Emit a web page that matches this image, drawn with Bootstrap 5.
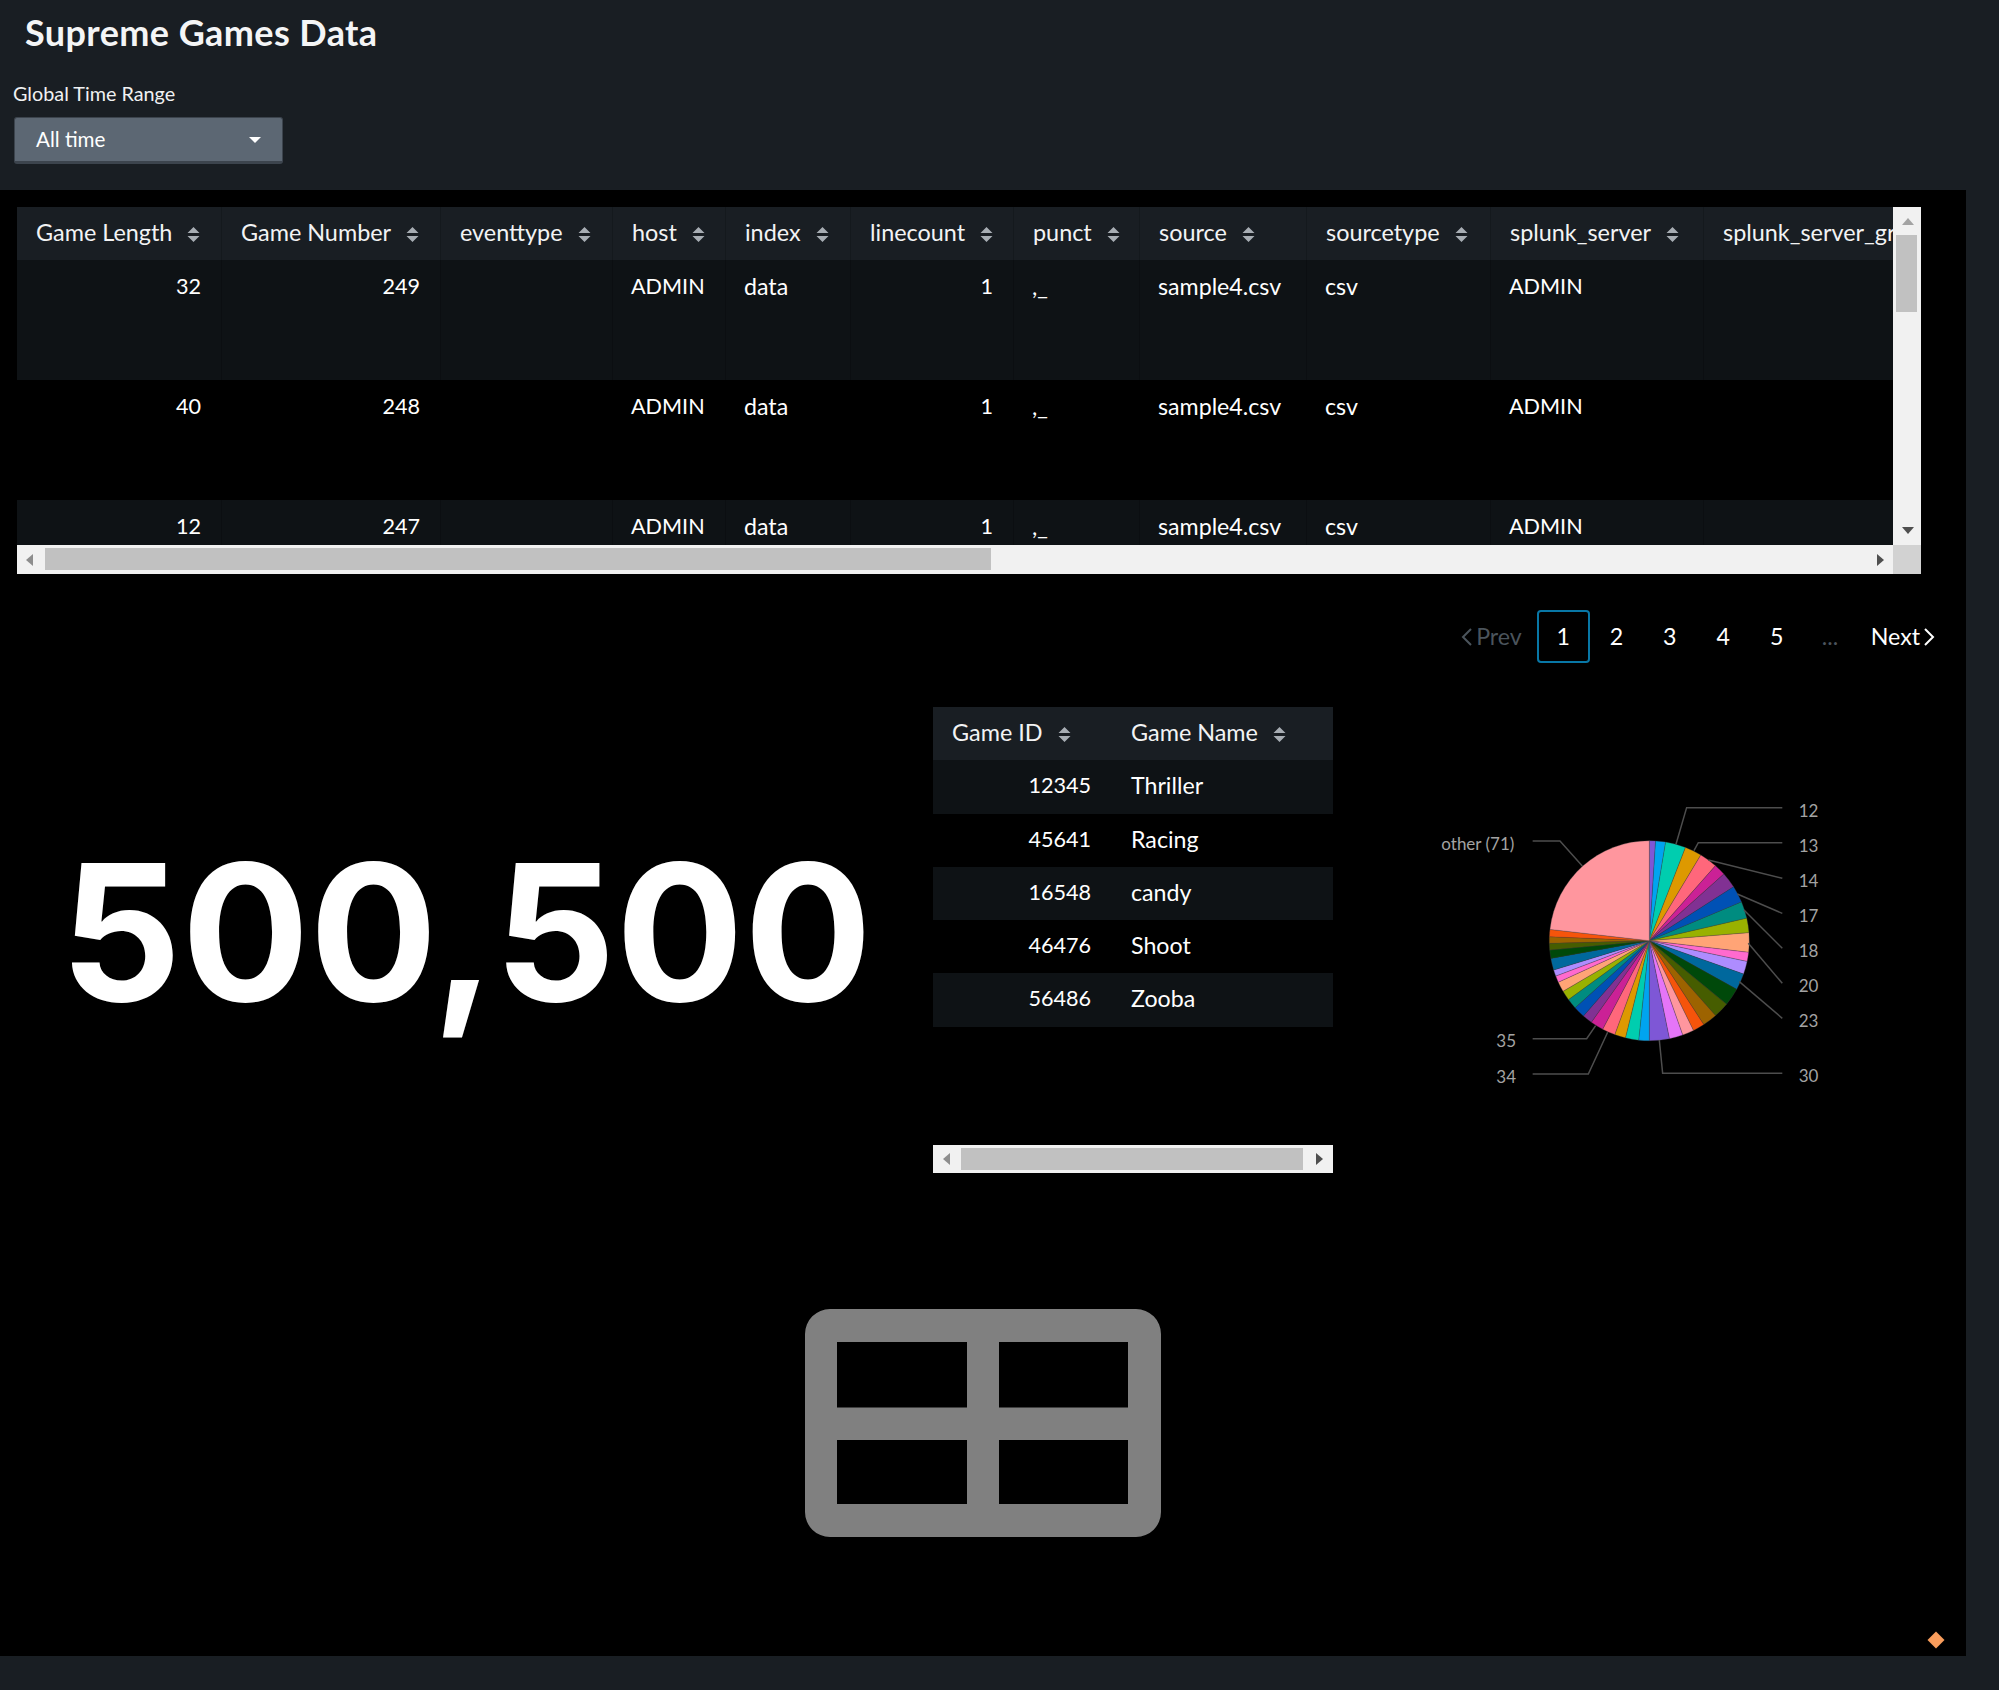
<!DOCTYPE html>
<html lang="en">
<head>
  <meta charset="UTF-8">
  <title>Supreme Games Data</title>
  <link href="https://cdn.jsdelivr.net/npm/bootstrap@5.3.0/dist/css/bootstrap.min.css" rel="stylesheet">
  <style>
    html, body { height: 100%; }
    body {
      background: #191e23;
      color: #fff;
      font-family: "Lato", "Liberation Sans", sans-serif;
      font-size: 23.2px;
      overflow: hidden;
    }
    .page-wrap { width: 1999px; height: 1690px; position: relative; }
    .dash-head { height: 190px; padding: 11px 13px 0 12px; }
    .dash-title { font-size: 36px; letter-spacing: .4px; font-weight: 700; line-height: 42px; margin: 0 0 0 13px; color: #f4f5f6; }
    .time-label { font-size: 19.8px; line-height: 24px; margin-top: 28px; margin-bottom: 12px; margin-left: 1px; color: #f0f1f2; }
    .time-btn {
      width: 269px; height: 47px; margin-left: 2px; padding: 0 21px;
      background: #5c6773; border: 1px solid #3c444d; border-bottom-width: 3px;
      color: #fff; font-size: 20.6px; border-radius: 3px;
    }
    .time-btn:hover, .time-btn:focus { background: #5c6773; color: #fff; border-color: #3c444d; }
    .time-btn::after { border-top: 6.500px solid #fff; border-right: 6.500px solid transparent; border-left: 6.500px solid transparent; margin-right: 0; }
    .dash-main { width: 1966px; height: 1466px; background: #000; padding: 17px 0 0 17px; }

    .scroll-box { position: relative; background: #f1f1f1; }
    .box-wide { width: 1904px; height: 367px; }
    .view-wide { width: 1876px; height: 338px; overflow: hidden; background: #000; }
    .data-tbl { table-layout: fixed; margin: 0; color: #fff; --bs-table-bg: transparent; --bs-table-color: #fff; border-collapse: separate; border-spacing: 0; }
    .data-tbl th, .data-tbl td { border: 0; border-left: 1px solid transparent; padding: 13px 20px 0 18px; line-height: 27px; font-weight: 400; white-space: nowrap; overflow: hidden; color: #fff; background: transparent; box-shadow: none; vertical-align: top; }
    .data-tbl th:first-child, .data-tbl td:first-child { border-left: 0; }
    .data-tbl th { background: #191e23; border-left-color: #14191d; height: 53px; padding: 12px 0 0 19px; font-size: 23.4px; color: #f2f3f4; }
    .tbl-one { width: 2206px; }
    .tbl-one td { height: 120px; }
    .data-tbl tbody tr:nth-child(odd) td { background: #0e1215; border-left-color: #0b0e11; }
    .data-tbl .num-cell, .data-tbl .caps-cell { font-size: 21.6px; }
    .num-cell { text-align: right; }
    .sort-mark { width: 13px; height: 15px; margin-left: 15px; vertical-align: -1px; }

    .bar-h { position: absolute; left: 0; bottom: 0; height: 29px; background: #f1f1f1; }
    .bar-v { position: absolute; right: 0; top: 0; width: 28px; height: 338px; background: #f1f1f1; }
    .bar-corner { position: absolute; right: 0; bottom: 0; width: 28px; height: 29px; background: #d2d2d2; }
    .thumb { position: absolute; background: #c1c1c1; }
    .arrow { position: absolute; width: 0; height: 0; border-style: solid; border-color: transparent; }
    .ar-left { border-width: 6px 7px 6px 0; border-right-color: #8d8d8d; }
    .ar-right { border-width: 6px 0 6px 7px; border-left-color: #4f4f4f; }
    .ar-up { border-width: 0 6px 7px; border-bottom-color: #a3a3a3; }
    .ar-down { border-width: 7px 6px 0; border-top-color: #4f4f4f; }

    .pager-row { height: 89px; padding: 36px 25px 0 0; }
    .pager-row .pagination { --bs-pagination-bg: transparent; --bs-pagination-border-width: 0; --bs-pagination-color: #fff; --bs-pagination-font-size: 23.2px; margin: 0; align-items: center; }
    .pager-row .page-link { width: 53.4px; height: 53px; margin-left: 0 !important; padding: 0; line-height: 53px; text-align: center; background: transparent; color: #fff; border-radius: 0 !important; box-shadow: none; }
    .pager-row .page-item.active .page-link { background: transparent; color: #fff; border: 2px solid #0877a6; border-radius: 4px !important; line-height: 49px; width: 53px; }
    .pager-row .page-item.disabled .page-link { background: transparent; color: #4b545c; }
    .pager-row .edge-link { width: auto; padding: 0 6px 0 14px; display: flex; align-items: center; gap: 3px; }
    .pager-row .edge-prev { padding: 0 15px 0 0; }
    .chev { width: 12px; height: 20px; fill: none; stroke: currentColor; stroke-width: 2; }

    .mid-row { height: 646px; padding-top: 44px; }
    .big-col { width: 916px; height: 425px; }
    .big-num { font-family: "Inter", "Liberation Sans", sans-serif; font-size: 190px; font-weight: 700; line-height: 1; color: #fff; padding: 130px 0 0 43px; white-space: nowrap; }
    .games-col { width: 400px; height: 466px; position: relative; }
    .tbl-two { width: 400px; }
    .tbl-two th, .tbl-two td { height: 53.3px; padding-top: 12px; border-left: 0; }
    .tbl-two td { padding-left: 19px; }
    .tbl-two .num-cell { padding-right: 21px; }
    .games-bar { position: absolute; left: 0; top: 438px; width: 400px; height: 28px; background: #f1f1f1; }
    .pie-col { width: 600px; height: 460px; }
    .pie-svg { display: block; margin-top: 13px; }
    .pie-svg text { font-family: "Lato", "Liberation Sans", sans-serif; font-size: 17px; fill: #a3a3a3; }
    .pie-svg .lead-line { fill: none; stroke: #4d4d4d; stroke-width: 1.5; }

    .grid-row { padding-left: 788px; }
    .grid-mark { display: block; }
    .diamond { position: absolute; left: 1930px; top: 1634px; width: 12px; height: 12px; background: #f99d5c; transform: rotate(45deg); }
  </style>
</head>
<body>
  <svg width="0" height="0" class="position-absolute">
    <symbol id="sort" viewBox="0 0 13 15"><path d="M6.5 0l6 6h-12zM6.5 15l-6-6h12z" fill="#a7adb3"/></symbol>
  </svg>
  <div class="page-wrap">
    <div class="dash-head">
      <h1 class="dash-title">Supreme Games Data</h1>
      <div class="time-label">Global Time Range</div>
      <button class="btn time-btn dropdown-toggle d-flex align-items-center justify-content-between" type="button">All time</button>
    </div>

    <div class="dash-main">
      <div class="scroll-box box-wide">
        <div class="view-wide">
          <table class="table data-tbl tbl-one" id="events-table"></table>
        </div>
        <div class="bar-h" style="width:1876px">
          <span class="arrow ar-left" style="left:9px;top:9px"></span>
          <span class="thumb" style="left:28px;width:946px;top:3px;height:22px"></span>
          <span class="arrow ar-right" style="right:9px;top:9px"></span>
        </div>
        <div class="bar-v">
          <span class="arrow ar-up" style="left:9px;top:11px"></span>
          <span class="thumb" style="left:3px;width:21px;top:28px;height:77px"></span>
          <span class="arrow ar-down" style="left:9px;bottom:11px"></span>
        </div>
        <div class="bar-corner"></div>
      </div>

      <div class="pager-row d-flex justify-content-end">
        <ul class="pagination">
          <li class="page-item disabled"><a class="page-link edge-link edge-prev" href="#"><svg class="chev" viewBox="0 0 12 20"><path d="M10 2L2 10l8 8"/></svg>Prev</a></li>
          <li class="page-item active"><a class="page-link" href="#">1</a></li>
          <li class="page-item"><a class="page-link" href="#">2</a></li>
          <li class="page-item"><a class="page-link" href="#">3</a></li>
          <li class="page-item"><a class="page-link" href="#">4</a></li>
          <li class="page-item"><a class="page-link" href="#">5</a></li>
          <li class="page-item disabled"><a class="page-link" href="#">...</a></li>
          <li class="page-item"><a class="page-link edge-link" href="#">Next<svg class="chev" viewBox="0 0 12 20"><path d="M2 2l8 8-8 8"/></svg></a></li>
        </ul>
      </div>

      <div class="mid-row d-flex">
        <div class="big-col"><div class="big-num">500,500</div></div>
        <div class="games-col">
          <table class="table data-tbl tbl-two">
            <colgroup><col style="width:179px"><col></colgroup>
            <thead><tr><th>Game ID<svg class="sort-mark"><use href="#sort"/></svg></th><th>Game Name<svg class="sort-mark"><use href="#sort"/></svg></th></tr></thead>
            <tbody>
              <tr><td class="num-cell">12345</td><td>Thriller</td></tr>
              <tr><td class="num-cell">45641</td><td>Racing</td></tr>
              <tr><td class="num-cell">16548</td><td>candy</td></tr>
              <tr><td class="num-cell">46476</td><td>Shoot</td></tr>
              <tr><td class="num-cell">56486</td><td>Zooba</td></tr>
            </tbody>
          </table>
          <div class="games-bar">
            <span class="arrow ar-left" style="left:10px;top:8px"></span>
            <span class="thumb" style="left:28px;width:342px;top:3px;height:22px"></span>
            <span class="arrow ar-right" style="right:10px;top:8px"></span>
          </div>
        </div>
        <div class="pie-col">
          <svg class="pie-svg" id="pie" width="600" height="460" viewBox="1333 720 600 460"></svg>
        </div>
      </div>

      <div class="grid-row">
        <svg class="grid-mark" width="356" height="228" viewBox="0 0 356 228">
          <path fill="#808080" fill-rule="evenodd" d="M25 0h306a25 25 0 0 1 25 25v178a25 25 0 0 1-25 25H25a25 25 0 0 1-25-25V25A25 25 0 0 1 25 0zM32 33v65.500h130V33zM194 33v65.500h129V33zM32 131v64h130v-64zM194 131v64h129v-64z"/>
        </svg>
      </div>
    </div>
    <div class="diamond"></div>
  </div>

  <script src="https://cdn.jsdelivr.net/npm/bootstrap@5.3.0/dist/js/bootstrap.bundle.min.js"></script>
  <script>
    // events table
    const columns = [
      ['Game Length', 204], ['Game Number', 219], ['eventtype', 172], ['host', 113], ['index', 125],
      ['linecount', 163], ['punct', 126], ['source', 167], ['sourcetype', 184], ['splunk_server', 213], ['splunk_server_group', 520]
    ];
    const rows = [['32', '249'], ['40', '248'], ['12', '247']];
    const sortIcon = '<svg class="sort-mark"><use href="#sort"/></svg>';
    let html = '<colgroup>' + columns.map(c => `<col style="width:${c[1]}px">`).join('') + '</colgroup>';
    html += '<thead><tr>' + columns.map(c => `<th>${c[0]}${sortIcon}</th>`).join('') + '</tr></thead><tbody>';
    rows.forEach(r => {
      html += `<tr><td class="num-cell">${r[0]}</td><td class="num-cell">${r[1]}</td><td></td><td class="caps-cell">ADMIN</td><td>data</td>` +
        '<td class="num-cell">1</td><td>,_</td><td>sample4.csv</td><td>csv</td><td class="caps-cell">ADMIN</td><td></td></tr>';
    });
    document.getElementById('events-table').innerHTML = html + '</tbody>';

    // pie chart, angles read clockwise from the top
    const palette = ['#7e57d6','#00a4f0','#00cdaf','#dd9900','#ff677b','#cb2196','#813193','#0051b5','#008c80','#99b100','#ffa476','#ff6ace','#ae8cff','#00689d','#00490a','#465d00','#9d6300','#f6540b','#ff969e','#e575f8'];
    const stops = [3.6,9.4,21.2,31,41.4,48.2,57.4,67.2,77,85.4,96.7,102,109.5,119.1,129.4,138.5,147,153.8,160.5,168.4,180,186.1,193.8,200.2,207.8,215.4,221.2,227.9,233.9,239.6,245.5,249.3,253,259.8,264.7,268.5,272.3,276.5,360];
    const cx = 1649.3, cy = 940.7, rad = 100;
    const pt = a => {
      const t = a * Math.PI / 180;
      return (cx + rad * Math.sin(t)).toFixed(2) + ' ' + (cy - rad * Math.cos(t)).toFixed(2);
    };
    let svg = '', from = 0;
    stops.forEach((to, i) => {
      const color = i === stops.length - 1 ? '#ff969e' : palette[i % palette.length];
      svg += `<path d="M${cx} ${cy}L${pt(from)}A${rad} ${rad} 0 ${to - from > 180 ? 1 : 0} 1 ${pt(to)}Z" fill="${color}" stroke="#444" stroke-width=".3"/>`;
      from = to;
    });
    // leader lines in zoom px (3x of the reference around 1420,780)
    const leads = [
      ['12', 1136, 93, 'M768 193L800 83H1087'], ['13', 1136, 198, 'M822 212L835 188H1087'],
      ['14', 1136, 303, 'M865 240L1087 295'], ['17', 1136, 408, 'M952 342L1087 400'],
      ['18', 1136, 513, 'M972 390L1087 505'], ['20', 1136, 618, 'M985 490L1087 610'],
      ['23', 1136, 723, 'M958 605L1087 715'], ['30', 1136, 888, 'M718 780L728 880H1087'],
      ['34', 288, 890, 'M563 757L505 882H338', 'end'], ['35', 288, 784, 'M527 737L500 776H338', 'end'],
      ['other (71)', 283, 193, 'M487 258L420 183H338', 'end']
    ];
    leads.forEach(l => {
      svg += `<path class="lead-line" transform="translate(1420 780) scale(.3333)" vector-effect="non-scaling-stroke" d="${l[3]}"/>`;
      svg += `<text x="${1420 + l[1] / 3}" y="${780 + l[2] / 3 + 6}" text-anchor="${l[4] || 'start'}">${l[0]}</text>`;
    });
    document.getElementById('pie').innerHTML = svg;
  </script>
</body>
</html>
